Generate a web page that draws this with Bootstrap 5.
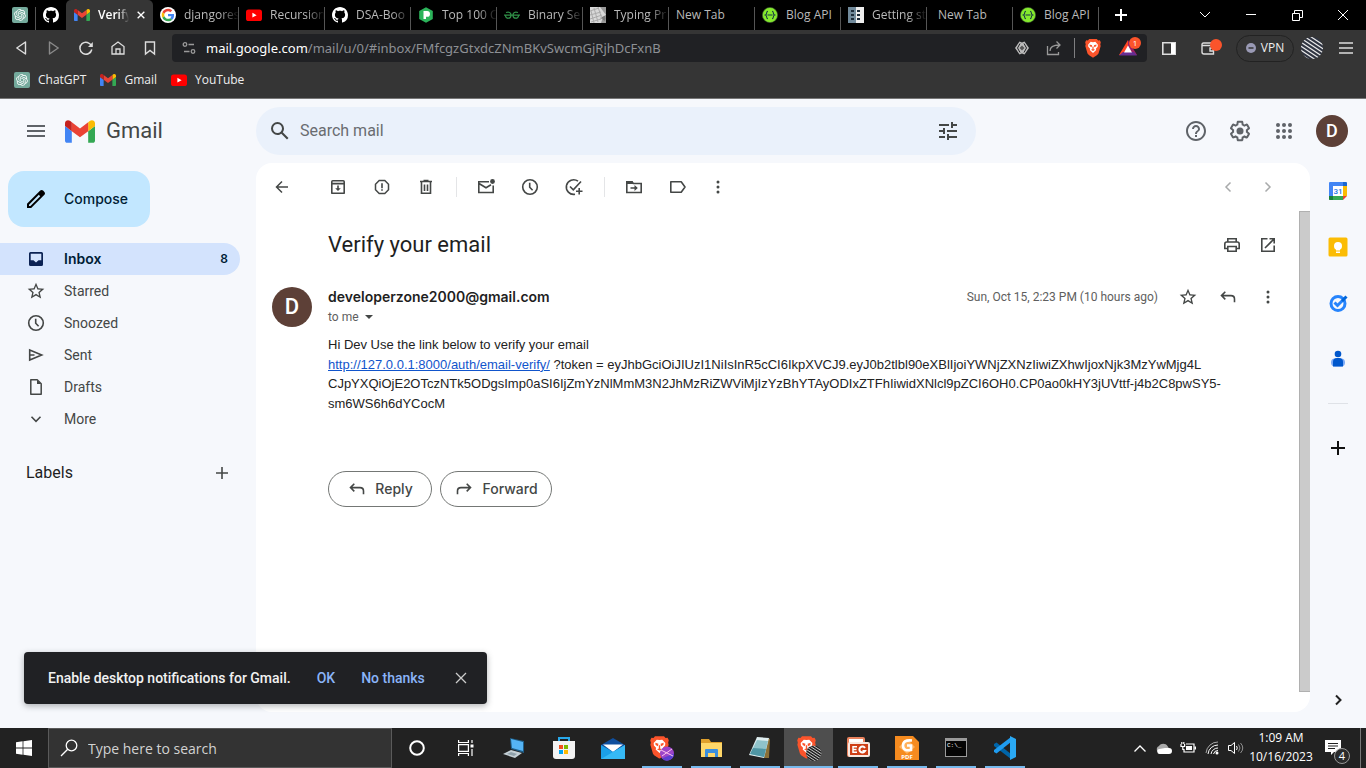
<!DOCTYPE html>
<html lang="en">
<head>
<meta charset="utf-8">
<meta name="viewport" content="width=device-width, initial-scale=1">
<title>Verify your email - Gmail</title>
<link href="https://cdn.jsdelivr.net/npm/bootstrap@5.3.0/dist/css/bootstrap.min.css" rel="stylesheet">
<style>
:root{--ui:"Open Sans","Noto Sans",sans-serif;--gs:Roboto,"Liberation Sans",sans-serif;--wide:Inter,Roboto,sans-serif;--ink:#444746}
body{font-family:var(--gs);font-size:14px;line-height:20px;color:#1f1f1f;background:#f6f8fc}
svg{display:block;flex:none;overflow:visible}
button{font:inherit;color:inherit;background:none;border:0;padding:0}
.ln{fill:none;stroke:currentColor}
.slot{display:flex;align-items:center;justify-content:center;flex:none}
.s32{width:32px}.s34{width:34px}.s36{width:36px}.s40{width:40px}.s44{width:44px}.s46{width:46px}.s49{width:49px}
.i16{width:16px;height:16px}.i20{width:20px;height:20px}.i24{width:24px;height:24px}

.chrome{font-family:var(--ui);font-size:12px;line-height:16px;color:#fff}
.tabstrip{height:30px;background:#000}
.pin{width:30px;position:relative}
.pin.sep{width:36px;padding-left:4px}
.tab{width:86px;padding:0 0 0 7px;gap:8px;color:#b9b9b9;text-decoration:none;position:relative}
.tab::after,.pin.sep::after{content:"";position:absolute;right:0;top:7px;bottom:0;width:1px;background:#555}
.tab span{flex:1;min-width:0;white-space:nowrap;-webkit-mask-image:linear-gradient(90deg,#000 65%,transparent);mask-image:linear-gradient(90deg,#000 65%,transparent)}
.tab.whole span{-webkit-mask-image:none;mask-image:none}
.tab.active{width:87px;padding:0 8px;background:#353535;color:#fff;border-radius:5px 5px 0 0;font-weight:600}
.tab.active::after{display:none}
.toolbar{height:36px;background:#353535;color:#ddd}
.nav-keys{width:172px;padding-left:6px}
.omni{height:28px;background:#202124;border-radius:4px;min-width:0}
.url{font-family:"Noto Sans",sans-serif;font-size:13px;color:#8d9095;white-space:nowrap;overflow:hidden}
.url b{font-weight:400;color:#fff}
.vpn{width:58px;height:27px;border:1px solid #222;border-radius:14px;gap:5px;color:#eee;font-size:12px}
.marks{height:33px;background:#353535;padding:0 0 4px 14px;gap:14px;border-bottom:1px solid #777}
.marks a{color:#eee;text-decoration:none;gap:8px}

.ghead{height:64px}
.gtools{color:#5f6368;padding-right:18px}
.side{width:256px}
.brand{font-size:22px;color:var(--ink);text-decoration:none;gap:11px;padding-left:9px}
.finder{flex:0 1 720px;height:48px;border-radius:24px;background:#eaf1fb;padding:0 4px 0 0;color:var(--ink)}
.finder input{flex:1;border:0;background:none;outline:0;font-size:16px;color:#1f1f1f;padding:0;min-width:0}
.finder input::placeholder{color:#696c70;opacity:1}
.face{background:#5d4037;color:#fff;border-radius:50%;display:flex;align-items:center;justify-content:center;flex:none;font-weight:500}
.f32{width:32px;height:32px;font-size:18px;margin-left:10px}
.f40{width:40px;height:40px;font-size:22px}
.compose{height:56px;width:142px;border-radius:16px;background:#c2e7ff;color:#001d35;font-family:var(--wide);font-weight:500;margin:8px 0 16px 8px;padding:0 16px;gap:16px}
.box{height:32px;padding:0 12px 0 26px;gap:18px;margin-right:16px;color:var(--ink);text-decoration:none;border-radius:0 16px 16px 0}
.box.on{background:#d3e3fd;color:#001d35;font-family:var(--wide);font-weight:600}
.box small{font-size:12px}
.labels{padding:0 24px 0 26px;margin-top:28px;font-size:16px;line-height:20px}
.pane{background:#fff;border-radius:16px;min-width:0;color:var(--ink)}
.acts{height:48px;padding:0 22px 0 4px}
.bar16{width:16px}.bar16 i{width:1px;height:20px;background:#e4e5e7}
.scroller{padding-bottom:20px}
.thumb{width:11px;background:#cbcbcb;border:1px solid #b0b0b0;border-right:0}
.subject{font-size:22px;line-height:28px;font-weight:400;color:#1f1f1f}
.subrow{padding:20px 13px 0 72px}
.msg{padding:28px 11px 0 16px;gap:16px}
.sender{font-family:var(--wide);font-weight:600;font-size:14px;line-height:20px;color:#1f1f1f}
.meta{font-size:12px;color:#5e5e5e}
.meta time{padding-right:10px}
.mailtext{font-family:"Liberation Sans",Arial,sans-serif;font-size:13px;line-height:1.5;color:#222;padding:8px 11px 0 72px}
.mailtext a{color:#15c}
.replies{padding:58px 0 0 72px;gap:8px}
.pill{height:36px;border:1px solid #747775;border-radius:18px;font-family:var(--wide);font-weight:500;gap:8px}
.pill.re{width:104px}.pill.fw{width:112px}
.rail{width:56px}
.rail .slot{height:56px;width:56px}
.rail hr{width:20px;margin:16px 0 16px;color:#9aa0a6}
.snack{position:absolute;left:24px;bottom:24px;width:463px;height:52px;background:#202124;border-radius:4px;color:#f1f1f1;padding:0 16px 0 24px;box-shadow:0 2px 6px rgba(60,64,67,.4);font-weight:500}
.snack .go{color:#8ab4f8;font-weight:500;margin-left:26px}

.taskbar{height:40px;background:#222;font-family:var(--ui);color:#fff;font-size:12px;line-height:19px}
.find{flex:0 1 344px;background:#333;border:1px solid #5a5a5a;padding:0 11px;gap:10px}
.find input{flex:1;border:0;background:none;outline:0;font-size:14px;color:#fff;padding:0;min-width:0}
.find input::placeholder{color:#d2d2d2;opacity:1}
.app{position:relative}
.run::after{content:"";position:absolute;left:5px;right:4px;bottom:0;height:2px;background:#76b9ed}
.app.front{background:#4e4e4e}.app.front::after{left:0;right:0}
.s24{width:24px}
.clock{width:66px;text-align:center;white-space:nowrap}
.bell{position:relative;width:38px}
.bell span{position:absolute;left:20px;top:20px;width:16px;height:16px;border:1px solid #999;border-radius:50%;background:#2b2b2b;font-size:11px;line-height:14px;text-align:center}
.peek{width:6px;border-left:1px solid #777}
</style>
</head>
<body class="d-flex flex-column min-vh-100">

<svg width="0" height="0" class="position-absolute" aria-hidden="true">
<symbol id="gpt" viewBox="0 0 24 24"><rect width="24" height="24" rx="3" fill="#74aa9c"/><path transform="translate(3.2 3.2) scale(.73)" fill="#fff" d="M22.2819 9.8211a5.9847 5.9847 0 0 0-.5157-4.9108 6.0462 6.0462 0 0 0-6.5098-2.9A6.0651 6.0651 0 0 0 4.9807 4.1818a5.9847 5.9847 0 0 0-3.9977 2.9 6.0462 6.0462 0 0 0 .7427 7.0966 5.98 5.98 0 0 0 .511 4.9107 6.051 6.051 0 0 0 6.5146 2.9001A5.9847 5.9847 0 0 0 13.2599 24a6.0557 6.0557 0 0 0 5.7718-4.2058 5.9894 5.9894 0 0 0 3.9977-2.9001 6.0557 6.0557 0 0 0-.7475-7.0729zm-9.022 12.6081a4.4755 4.4755 0 0 1-2.8764-1.0408l.1419-.0804 4.7783-2.7582a.7948.7948 0 0 0 .3927-.6813v-6.7369l2.02 1.1686a.071.071 0 0 1 .038.052v5.5826a4.504 4.504 0 0 1-4.4945 4.4944zm-9.6607-4.1254a4.4708 4.4708 0 0 1-.5346-3.0137l.142.0852 4.783 2.7582a.7712.7712 0 0 0 .7806 0l5.8428-3.3685v2.3324a.0804.0804 0 0 1-.0332.0615L9.74 19.9502a4.4992 4.4992 0 0 1-6.1408-1.6464zM2.3408 7.8956a4.485 4.485 0 0 1 2.3655-1.9728V11.6a.7664.7664 0 0 0 .3879.6765l5.8144 3.3543-2.0201 1.1685a.0757.0757 0 0 1-.071 0l-4.8303-2.7865A4.504 4.504 0 0 1 2.3408 7.872zm16.5963 3.8558L13.1038 8.364 15.1192 7.2a.0757.0757 0 0 1 .071 0l4.8303 2.7913a4.4944 4.4944 0 0 1-.6765 8.1042v-5.6772a.79.79 0 0 0-.407-.667zm2.0107-3.0231l-.142-.0852-4.7735-2.7818a.7759.7759 0 0 0-.7854 0L9.409 9.2297V6.8974a.0662.0662 0 0 1 .0284-.0615l4.8303-2.7866a4.4992 4.4992 0 0 1 6.6802 4.66zM8.3065 12.863l-2.02-1.1638a.0804.0804 0 0 1-.038-.0567V6.0742a4.4992 4.4992 0 0 1 7.3757-3.4537l-.142.0805L8.704 5.459a.7948.7948 0 0 0-.3927.6813zm1.0976-2.3654l2.602-1.4998 2.6069 1.4998v2.9994l-2.5974 1.4997-2.6067-1.4997Z"/></symbol>
<symbol id="github" viewBox="0 0 16 16"><path fill="#fff" d="M8 0C3.58 0 0 3.58 0 8c0 3.54 2.29 6.53 5.47 7.59.4.07.55-.17.55-.38 0-.19-.01-.82-.01-1.49-2.01.37-2.53-.49-2.69-.94-.09-.23-.48-.94-.82-1.13-.28-.15-.68-.52-.01-.53.63-.01 1.08.58 1.23.82.72 1.21 1.87.87 2.33.66.07-.52.28-.87.51-1.07-1.78-.2-3.64-.89-3.64-3.95 0-.87.31-1.59.82-2.15-.08-.2-.36-1.02.08-2.12 0 0 .67-.21 2.2.82.64-.18 1.32-.27 2-.27.68 0 1.36.09 2 .27 1.53-1.04 2.2-.82 2.2-.82.44 1.1.16 1.92.08 2.12.51.56.82 1.27.82 2.15 0 3.07-1.87 3.75-3.65 3.95.29.25.54.73.54 1.48 0 1.07-.01 1.93-.01 2.2 0 .21.15.46.55.38A8.012 8.012 0 0 0 16 8c0-4.42-3.58-8-8-8z"/></symbol>
<symbol id="gmail" viewBox="52 42 88 66"><path fill="#4285f4" d="M58 108h14V74L52 59v43c0 3.32 2.69 6 6 6"/><path fill="#34a853" d="M120 108h14c3.32 0 6-2.69 6-6V59l-20 15"/><path fill="#fbbc04" d="M120 48v26l20-15v-8c0-7.42-8.47-11.65-14.4-7.2"/><path fill="#ea4335" d="M72 74V48l24 18 24-18v26L96 92"/><path fill="#c5221f" d="M52 51v8l20 15V48l-5.6-4.2c-5.94-4.45-14.4-.22-14.4 7.2"/></symbol>
<symbol id="yt" viewBox="0 0 16 16"><rect y="2.5" width="16" height="11.5" rx="2.6" fill="#f00"/><path fill="#fff" d="M6.4 5.8v4.8l4.2-2.4z"/></symbol>
<symbol id="swag" viewBox="0 0 16 16"><circle cx="8" cy="8" r="7.6" fill="#85ea2d" stroke="#3d5b32" stroke-width=".6"/><path d="M6 4.200C3.800 4.200 5.400 7.400 3.500 8c1.900.6.3 3.800 2.500 3.800M10 4.200c2.200 0 .6 3.200 2.500 3.800-1.900.6-.3 3.800-2.500 3.800M5.500 8h5" fill="none" stroke="#173647" stroke-width="1.100"/></symbol>
<symbol id="brave" viewBox="0 0 16 20"><path fill="#fb542b" d="M4.200 1h7.600l1.300 1.500 1.700-.2 1 2-.5 2.200.4 1.500-2.200 7.600c-.5 1.300-3.900 3.200-5.500 4.100-1.600-.9-5-2.800-5.500-4.100L.3 8l.4-1.500-.5-2.200 1-2 1.700.2z"/><path fill="#fff" d="M8 4.200l2.300-.4 2.600 2.900-.2 2-1.800 2 .3 1.300L8 15l-3.200-3 .3-1.300-1.800-2-.2-2 2.600-2.900z"/><path fill="#fb542b" d="M4.500 6.500l2.600.8-.4 2-2-1zM11.500 6.500l-2.600.8.4 2 2-1zM7.400 8.500h1.200v3H7.400zM5.900 11.800L8 11l2.100.8L8 13z"/></symbol>
<symbol id="star" viewBox="0 0 24 24"><path fill="currentColor" d="M22 9.240l-7.190-.62L12 2 9.190 8.630 2 9.240l5.460 4.730L5.820 21 12 17.270 18.180 21l-1.630-7.030L22 9.240zM12 15.400l-3.760 2.270 1-4.280-3.320-2.880 4.380-.38L12 6.100l1.710 4.040 4.380.38-3.320 2.880 1 4.280L12 15.400z"/></symbol>
<symbol id="clock" viewBox="0 0 20 20"><g class="ln" stroke-width="1.600"><circle cx="10" cy="10" r="7.300"/><path d="M9.700 5.800V10.300l2.900 3"/></g></symbol>
<symbol id="reply" viewBox="0 0 20 20"><path class="ln" stroke-width="1.600" d="M7.300 4.800L3.500 8.600l3.800 3.800M3.700 8.600H13c2.200 0 3.500 1.200 3.500 3.400v3.200"/></symbol>
<symbol id="dots" viewBox="0 0 20 20"><g fill="currentColor"><circle cx="10" cy="5" r="1.500"/><circle cx="10" cy="10" r="1.500"/><circle cx="10" cy="15" r="1.500"/></g></symbol>
<symbol id="x" viewBox="0 0 12 12"><path class="ln" d="M1 1l10 10M11 1L1 11"/></symbol>
</svg>

<header class="chrome">
<nav class="tabstrip d-flex" aria-label="Tabs">
<a href="#" class="slot pin sep" aria-label="ChatGPT"><svg class="i16"><use href="#gpt"/></svg></a>
<a href="#" class="slot pin" aria-label="GitHub"><svg class="i16"><use href="#github"/></svg></a>
<a href="#" class="tab active d-flex align-items-center"><svg width="16" height="12"><use href="#gmail"/></svg><span>Verify</span><svg width="8" height="8" stroke-width="2"><use href="#x"/></svg></a>
<a href="#" class="tab d-flex align-items-center"><svg class="i16" viewBox="0 0 16 16"><circle cx="8" cy="8" r="8" fill="#fff"/><g transform="translate(1.700 1.700) scale(.263)"><path fill="#ea4335" d="M24 9.500c3.540 0 6.710 1.220 9.210 3.600l6.850-6.850C35.900 2.380 30.470 0 24 0 14.620 0 6.510 5.380 2.560 13.220l7.980 6.190C12.430 13.720 17.740 9.500 24 9.500z"/><path fill="#4285f4" d="M46.980 24.550c0-1.570-.15-3.090-.38-4.550H24v9.020h12.940c-.58 2.960-2.260 5.480-4.780 7.180l7.730 6c4.510-4.180 7.090-10.360 7.090-17.650z"/><path fill="#fbbc05" d="M10.530 28.590c-.48-1.450-.76-2.990-.76-4.590s.27-3.140.76-4.590l-7.980-6.190C.92 16.460 0 20.120 0 24c0 3.880.92 7.540 2.560 10.780l7.970-6.190z"/><path fill="#34a853" d="M24 48c6.480 0 11.930-2.130 15.890-5.810l-7.730-6c-2.150 1.450-4.920 2.300-8.160 2.300-6.260 0-11.570-4.220-13.470-9.910l-7.980 6.190C6.510 42.620 14.620 48 24 48z"/></g></svg><span>djangores</span></a>
<a href="#" class="tab d-flex align-items-center"><svg class="i16"><use href="#yt"/></svg><span>Recursion</span></a>
<a href="#" class="tab d-flex align-items-center"><svg class="i16"><use href="#github"/></svg><span>DSA-Boo</span></a>
<a href="#" class="tab d-flex align-items-center"><svg class="i16" viewBox="0 0 16 16"><path fill="#2bb35a" d="M8 .3l6.800 3.800v7.800L8 15.700 1.200 11.900V4.100z"/><path fill="#fff" d="M5.500 4h3.600a2.900 2.900 0 0 1 0 5.800H8V12H5.500z"/></svg><span>Top 100 C</span></a>
<a href="#" class="tab d-flex align-items-center"><svg class="i16" viewBox="0 0 16 16"><path class="ln" style="stroke:#2f8d46" stroke-width="1.300" d="M0 8.200h16M2 5.500c3-1 5 0 5 2.700 0 4-5.500 4-5.500.2M14 5.500c-3-1-5 0-5 2.700 0 4 5.500 4 5.500.2"/></svg><span>Binary Se</span></a>
<a href="#" class="tab d-flex align-items-center"><svg class="i16" viewBox="0 0 16 16"><rect width="16" height="16" fill="#d8d8d8"/><path fill="#999" d="M10 0h6v8zM12 13l4-3v6h-5z"/><path fill="#777" d="M16 8l-1 6-5-3z"/><path stroke="#aaa" fill="none" d="M0 4l9-3M0 8l11-3M0 12l12-4M1 15l10-3M4 1l4 14M8 0l4 12M1 4l3 12"/></svg><span>Typing Pr</span></a>
<a href="#" class="tab whole d-flex align-items-center"><span>New Tab</span></a>
<a href="#" class="tab whole d-flex align-items-center"><svg class="i16"><use href="#swag"/></svg><span>Blog API</span></a>
<a href="#" class="tab d-flex align-items-center"><svg class="i16" viewBox="0 0 16 16"><path fill="#718a9b" d="M0 0h8v16H0z"/><path fill="#eee" d="M8 0h8v16H8z"/><path fill="#1c2b39" d="M3 3h3v2H3zM3 7h3v2H3zM3 11h3v2H3zM9 3h3v2H9zM9 7h3v2H9zM9 11h3v2H9z"/></svg><span>Getting st</span></a>
<a href="#" class="tab whole d-flex align-items-center"><span class="ps-1">New Tab</span></a>
<a href="#" class="tab whole d-flex align-items-center"><svg class="i16"><use href="#swag"/></svg><span>Blog API</span></a>
<button class="slot s44" aria-label="New tab"><svg width="12" height="12" viewBox="0 0 12 12"><path class="ln" stroke-width="2" d="M6 0v12M0 6h12"/></svg></button>
<div class="ms-auto d-flex">
<button class="slot s46" aria-label="Search tabs"><svg width="10" height="6" viewBox="0 0 10 6"><path class="ln" d="M0 0l5 5 5-5"/></svg></button>
<button class="slot s46" aria-label="Minimize"><svg width="10" height="2" viewBox="0 0 10 2"><path fill="#fff" d="M0 0h10v1H0z"/></svg></button>
<button class="slot s46" aria-label="Restore"><svg width="11" height="11" viewBox="0 0 11 11"><path class="ln" d="M.5 3.500h7v7h-7zM2.500 3.500v-3h8v7h-3"/></svg></button>
<button class="slot s46" aria-label="Close"><svg width="12" height="12"><use href="#x"/></svg></button>
</div>
</nav>

<div class="toolbar d-flex align-items-center">
<div class="d-flex nav-keys flex-shrink-0">
<button class="slot s32" aria-label="Back"><svg class="i16" viewBox="0 0 16 16"><path class="ln" stroke-width="1.400" stroke-linejoin="round" d="M11.500 2v12L2.800 8z"/></svg></button>
<button class="slot s32 opacity-50" aria-label="Forward"><svg class="i16" viewBox="0 0 16 16"><path class="ln" stroke-width="1.400" stroke-linejoin="round" d="M3.500 2v12l8.700-6z"/></svg></button>
<button class="slot s32" aria-label="Reload"><svg class="i16" viewBox="0 0 16 16"><path class="ln" stroke-width="1.500" d="M13.500 6A6 6 0 1 0 13.800 9.500"/><path fill="currentColor" d="M14.800 2v5H10z"/></svg></button>
<button class="slot s32" aria-label="Home"><svg class="i16" viewBox="0 0 16 16"><path class="ln" stroke-width="1.300" d="M2 6.500L8 2l6 4.500V14H2zM6 14V9h4v5"/></svg></button>
<button class="slot s32" aria-label="Bookmark"><svg class="i16" viewBox="0 0 16 16"><path class="ln" stroke-width="1.400" d="M3.500 2h9v12L8 10.500 3.500 14z"/></svg></button>
</div>
<div class="omni d-flex align-items-center flex-fill me-1">
<button class="slot s34" aria-label="Site information"><svg width="14" height="14" viewBox="0 0 14 14"><g fill="none" stroke="#9a9a9a" stroke-width="1.300"><circle cx="3" cy="3.500" r="1.800"/><path d="M6.500 3.500H12M2 10.500h5.500"/><circle cx="11" cy="10.500" r="1.800"/></g></svg></button>
<div class="url flex-fill" role="textbox" aria-label="Address"><b>mail.google.com</b>/mail/u/0/#inbox/FMfcgzGtxdcZNmBKvSwcmGjRjhDcFxnB</div>
<button class="slot s32" aria-label="Translate"><svg class="i16" viewBox="0 0 16 16"><path fill="#bbb" d="M8 2.500l2.500-1L15 8l-4.500 6.500L8 13.500l-2.500 1L1 8l4.500-6.500z"/><path fill="none" stroke="#202124" d="M6 3.500L3.500 8 6 12.500M10 3.500L12.500 8 10 12.500"/><path fill="#555" d="M8 5.500L10.500 8 8 10.500 5.500 8z"/></svg></button>
<button class="slot s32" aria-label="Share"><svg class="i16" viewBox="0 0 16 16"><path fill="none" stroke="#999" stroke-width="1.300" d="M1.500 6v8.500h11V12M4 11c0-4 3-6 9.500-6M10.500 1.500L14 5l-3.500 3.500"/></svg></button>
<div class="vr my-1 opacity-50 ms-1"></div>
<button class="slot s36" aria-label="Brave Shields"><svg width="16" height="20"><use href="#brave"/></svg></button>
<button class="slot s36" aria-label="Rewards, 1 new"><svg width="20" height="18" viewBox="0 0 20 18"><path fill="#ff4724" d="M9 1L0 16h4.500L9 8z"/><path fill="#9e1f63" d="M9 1v7l4.500 8H18z"/><path fill="#662d91" d="M0 16.500h18L15 13H4z"/><path fill="#fff" d="M9 6.500l4 7H5z"/><circle cx="16" cy="4" r="6" fill="#fb542b"/><text x="16" y="7" font-size="8" fill="#fff" text-anchor="middle">1</text></svg></button>
</div>
<button class="slot s36" aria-label="Sidebar"><svg width="14" height="13" viewBox="0 0 14 13"><path class="ln" stroke-width="1.600" d="M.8.8h12.400v11.400H.8z"/><path fill="#fff" d="M9 1h4v11H9z"/></svg></button>
<button class="slot s49" aria-label="Wallet"><svg width="20" height="16" viewBox="0 0 20 16"><path class="ln" stroke-width="1.400" d="M11 3H1.500Q0 3 0 4.500V12q0 2 2 2h9.500V5.500H0M12 8H8v3h4"/><circle cx="14" cy="5" r="6" fill="#fb542b"/></svg></button>
<button class="slot vpn"><svg width="10" height="10" viewBox="0 0 10 10"><circle cx="5" cy="5" r="5" fill="#9a9ab5"/><path stroke="#353535" stroke-width="1.500" d="M2.500 5h5"/></svg>VPN</button>
<button class="slot s36" aria-label="Profile"><svg width="22" height="22" viewBox="0 0 22 22"><defs><clipPath id="disc"><circle cx="11" cy="11" r="11"/></clipPath></defs><g clip-path="url(#disc)"><path fill="#303542" d="M0 0h22v22H0z"/><path id="stripes" stroke="#e8e8e8" stroke-width="1.200" d="M-2-4l26 17M-2 0l26 17M-2 4l26 17M-2 8l26 17M-2 12l26 17M-2 16l26 17M-2-8l26 17"/></g></svg></button>
<button class="slot s32 me-1" aria-label="Menu"><svg width="14" height="12" viewBox="0 0 14 12"><path class="ln" stroke-width="1.400" d="M0 1h14M0 6h14M0 11h14"/></svg></button>
</div>

<nav class="marks d-flex align-items-center" aria-label="Bookmarks">
<a href="#" class="d-flex align-items-center"><svg class="i16"><use href="#gpt"/></svg>ChatGPT</a>
<a href="#" class="d-flex align-items-center"><svg width="16" height="12"><use href="#gmail"/></svg>Gmail</a>
<a href="#" class="d-flex align-items-center"><svg class="i16"><use href="#yt"/></svg>YouTube</a>
</nav>
</header>

<div class="flex-fill d-flex flex-column position-relative pb-3">
<div class="ghead d-flex align-items-center">
<div class="side d-flex align-items-center flex-shrink-0">
<button class="slot s40 ms-3" aria-label="Main menu"><svg class="i24" viewBox="0 0 24 24"><path fill="#5f6368" d="M3 18h18v-2H3v2zm0-5h18v-2H3v2zm0-7v2h18V6H3z"/></svg></button>
<a href="#" class="brand d-flex align-items-center"><svg width="30" height="23"><use href="#gmail"/></svg>Gmail</a>
</div>
<form class="finder d-flex align-items-center">
<button type="button" class="slot s44" aria-label="Search"><svg class="i24 ms-1" viewBox="0 0 24 24"><path fill="currentColor" d="M20.490 19l-5.730-5.730C15.530 12.200 16 10.910 16 9.500A6.500 6.500 0 1 0 9.500 16c1.410 0 2.700-.47 3.770-1.240L19 20.490 20.490 19zM5 9.500C5 7.010 7.010 5 9.500 5S14 7.010 14 9.500 11.990 14 9.500 14 5 11.990 5 9.500z"/></svg></button>
<input type="text" placeholder="Search mail" aria-label="Search mail">
<button type="button" class="slot s49" aria-label="Show search options"><svg class="i24" viewBox="0 0 24 24"><path fill="currentColor" d="M3 17v2h6v-2H3zM3 5v2h10V5H3zm10 16v-2h8v-2h-8v-2h-2v6h2zM7 9v2H3v2h4v2h2V9H7zm14 4v-2H11v2h10zm-6-4h2V7h4V5h-4V3h-2v6z"/></svg></button>
</form>
<div class="gtools ms-auto d-flex align-items-center">
<button class="slot s44" aria-label="Support"><svg class="i24" viewBox="0 0 24 24"><path fill="currentColor" d="M11 18h2v-2h-2v2zm1-16C6.480 2 2 6.480 2 12s4.480 10 10 10 10-4.480 10-10S17.520 2 12 2zm0 18c-4.410 0-8-3.590-8-8s3.590-8 8-8 8 3.590 8 8-3.590 8-8 8zm0-14c-2.210 0-4 1.790-4 4h2c0-1.100.9-2 2-2s2 .9 2 2c0 2-3 1.750-3 5h2c0-2.250 3-2.500 3-5 0-2.210-1.790-4-4-4z"/></svg></button>
<button class="slot s44" aria-label="Settings"><svg class="i24" viewBox="0 0 24 24"><path fill="currentColor" d="M13.850 22.250h-3.700c-.74 0-1.360-.54-1.450-1.270l-.27-1.890c-.27-.14-.53-.29-.79-.46l-1.800.72c-.7.26-1.470-.03-1.810-.65L2.200 15.530c-.35-.66-.2-1.440.36-1.880l1.530-1.190c-.01-.15-.02-.3-.02-.46 0-.15.01-.31.02-.46l-1.520-1.190c-.59-.45-.74-1.260-.37-1.880l1.850-3.190c.34-.62 1.110-.9 1.790-.63l1.810.73c.26-.17.52-.32.78-.46l.27-1.910c.09-.7.71-1.250 1.440-1.250h3.700c.74 0 1.360.54 1.450 1.270l.27 1.890c.27.14.53.29.79.46l1.800-.72c.71-.26 1.480.03 1.820.65l1.840 3.180c.36.66.2 1.440-.36 1.880l-1.520 1.190c.01.15.02.3.02.46s-.01.31-.02.46l1.520 1.190c.56.45.72 1.230.37 1.860l-1.860 3.220c-.34.62-1.110.9-1.800.63l-1.800-.72c-.26.17-.52.32-.78.46l-.27 1.910c-.1.68-.72 1.220-1.460 1.220zm-3.230-2h2.760l.37-2.550.53-.22c.44-.18.88-.44 1.340-.78l.45-.34 2.380.96 1.380-2.400-2.030-1.580.07-.56c.03-.26.06-.51.06-.78s-.03-.53-.06-.78l-.07-.56 2.030-1.580-1.390-2.400-2.390.96-.45-.35c-.42-.32-.87-.58-1.330-.77l-.52-.22-.37-2.550h-2.760l-.37 2.550-.53.21c-.44.19-.88.44-1.340.79l-.45.33-2.380-.95-1.390 2.390 2.030 1.580-.07.56a7 7 0 0 0-.06.79c0 .26.02.53.06.78l.07.56-2.030 1.580 1.380 2.400 2.390-.96.45.35c.43.33.86.58 1.330.77l.53.22.38 2.550z"/><circle cx="12" cy="12" r="3.500" fill="currentColor"/></svg></button>
<button class="slot s44" aria-label="Google apps"><svg class="i24" viewBox="0 0 24 24"><g fill="currentColor"><circle cx="6" cy="6" r="2"/><circle cx="12" cy="6" r="2"/><circle cx="18" cy="6" r="2"/><circle cx="6" cy="12" r="2"/><circle cx="12" cy="12" r="2"/><circle cx="18" cy="12" r="2"/><circle cx="6" cy="18" r="2"/><circle cx="12" cy="18" r="2"/><circle cx="18" cy="18" r="2"/></g></svg></button>
<button class="face f32" aria-label="Account">D</button>
</div>
</div>

<div class="d-flex flex-fill">
<aside class="side flex-shrink-0">
<button class="compose d-flex align-items-center"><svg class="i24" viewBox="0 0 24 24"><path fill="#000" d="M20.410 4.940l-1.350-1.350c-.78-.78-2.050-.78-2.830 0L3 16.820V21h4.180L20.410 7.770c.79-.78.79-2.050 0-2.830zm-14 14.120L5 19v-1.360l9.820-9.820 1.410 1.410-9.820 9.830z"/></svg>Compose</button>
<nav aria-label="Mailboxes">
<a href="#" class="box on d-flex align-items-center"><svg class="i20" viewBox="0 0 20 20"><path fill="#0b2253" d="M4.500 3h11A1.500 1.500 0 0 1 17 4.500v11a1.500 1.500 0 0 1-1.500 1.500h-11A1.500 1.500 0 0 1 3 15.500v-11A1.500 1.500 0 0 1 4.500 3z"/><path fill="#d3e3fd" d="M4.700 4.700h10.600v6.600H12.500L10 13.500 7.500 11.300H4.700z"/></svg>Inbox<small class="ms-auto">8</small></a>
<a href="#" class="box d-flex align-items-center"><svg class="i20" viewBox="0 0 24 24"><use href="#star" width="24" height="24"/></svg>Starred</a>
<a href="#" class="box d-flex align-items-center"><svg class="i20"><use href="#clock"/></svg>Snoozed</a>
<a href="#" class="box d-flex align-items-center"><svg class="i20" viewBox="0 0 20 20"><path class="ln" stroke-width="1.600" d="M3.700 5l12 5-12 5zM4 10h4.500"/></svg>Sent</a>
<a href="#" class="box d-flex align-items-center"><svg class="i20" viewBox="0 0 20 20"><path class="ln" stroke-width="1.500" stroke-linejoin="round" d="M4.800 2.800h6.400l4 4v10.400H4.800z"/><path fill="currentColor" d="M11 3v4h4z"/></svg>Drafts</a>
<a href="#" class="box d-flex align-items-center"><svg class="i20" viewBox="0 0 20 20"><path class="ln" stroke-width="1.600" d="M5.500 7.800L10 12.300l4.500-4.500"/></svg>More</a>
</nav>
<div class="labels d-flex align-items-center justify-content-between">Labels<button class="slot" aria-label="Create new label"><svg width="20" height="20" viewBox="0 0 20 20"><path fill="none" stroke="#444746" stroke-width="1.600" d="M10 4v12M4 10h12"/></svg></button></div>
</aside>

<main class="pane flex-fill d-flex flex-column">
<div class="acts d-flex">
<button class="slot s44 me-2" aria-label="Back to Inbox"><svg class="i20" viewBox="0 0 20 20"><path class="ln" stroke-width="1.500" d="M16 10H4.700M10 4.500L4.500 10l5.500 5.500"/></svg></button>
<button class="slot s44 ms-1" aria-label="Archive"><svg class="i20" viewBox="0 0 20 20"><path class="ln" stroke-width="1.600" stroke-linejoin="round" d="M3.800 4.800q0-1 1-1h10.400q1 0 1 1v11.400H3.800zM3.800 6.600h12.400"/><path fill="currentColor" d="M9.200 8.500h1.600v2.800h2L10 14l-2.800-2.700h2z"/></svg></button>
<button class="slot s44" aria-label="Report spam"><svg class="i20" viewBox="0 0 20 20"><path class="ln" stroke-width="1.500" d="M7.200 3.500h5.600l3.700 3.700v5.600l-3.700 3.700H7.200l-3.700-3.700V7.200z"/><path fill="currentColor" d="M9.200 6.200h1.600v5H9.200zM9.200 12.300h1.600v1.500H9.200z"/></svg></button>
<button class="slot s44" aria-label="Delete"><svg class="i20" viewBox="0 0 20 20"><path class="ln" stroke-width="1.600" d="M5.500 5v11.200h9V5M4 4.500h12M7.500 3.500h5M8.500 7.500v6.500M11.500 7.500v6.500"/></svg></button>
<div class="slot bar16"><i></i></div>
<button class="slot s44" aria-label="Mark as unread"><svg class="i20" viewBox="0 0 20 20"><path class="ln" stroke-width="1.600" d="M13 4.800H2.800v10.700h14.400V8.500M3 6.500l7 4.300 5-3"/><circle cx="16.500" cy="4.500" r="2.400" fill="currentColor"/></svg></button>
<button class="slot s44" aria-label="Snooze"><svg class="i20"><use href="#clock"/></svg></button>
<button class="slot s44" aria-label="Add to Tasks"><svg class="i20" viewBox="0 0 20 20"><path class="ln" stroke-width="1.600" d="M14 4.200A7.300 7.300 0 1 0 11 17.200M6 9.500l3.300 3.300L17 4.500M15.200 11v6.500M12 14.200h6.500"/></svg></button>
<div class="slot bar16"><i></i></div>
<button class="slot s44" aria-label="Move to"><svg class="i20" viewBox="0 0 20 20"><path class="ln" stroke-width="1.600" d="M2.800 4.800h5l1.500 1.700h7.900v9H2.800zM6.500 11h6"/><path fill="currentColor" d="M2.500 4h6l1.500 3H2.500zM10.500 8l3.300 3-3.300 3z"/></svg></button>
<button class="slot s44" aria-label="Labels"><svg class="i20" viewBox="0 0 20 20"><path class="ln" stroke-width="1.600" stroke-linejoin="round" d="M2.800 4.800h10.400L17 10l-3.800 5.200H2.800z"/></svg></button>
<button class="slot s36" aria-label="More"><svg class="i20"><use href="#dots"/></svg></button>
<div class="ms-auto d-flex" style="color:#a8aaab">
<button class="slot s40" aria-label="Newer"><svg class="i20" viewBox="0 0 20 20"><path class="ln" stroke-width="1.500" d="M12.500 5.500L8 10l4.500 4.500"/></svg></button>
<button class="slot s40" aria-label="Older"><svg class="i20" viewBox="0 0 20 20"><path class="ln" stroke-width="1.500" d="M7.500 5.500L12 10l-4.500 4.500"/></svg></button>
</div>
</div>
<div class="scroller d-flex flex-fill">
<article class="flex-fill">
<div class="subrow d-flex align-items-center">
<h1 class="subject m-0 flex-fill">Verify your email</h1>
<button class="slot s36" aria-label="Print all"><svg class="i20" viewBox="0 0 20 20"><path class="ln" stroke-width="1.600" d="M5.800 6.500V3.800h8.400v2.700M5.500 13.500H2.800V9q0-2 2-2h10.400q2 0 2 2v4.500H14.500M5.800 11.500h8.400v4.700H5.800z"/></svg></button>
<button class="slot s36" aria-label="In new window"><svg class="i20" viewBox="0 0 20 20"><path class="ln" stroke-width="1.600" d="M9.500 3.800H3.800v12.400h12.400V10.500M11.500 3.800h4.700v4.700M16 4L7 13"/></svg></button>
</div>
<div class="msg d-flex">
<div class="face f40">D</div>
<div class="flex-fill">
<div class="sender">developerzone2000@gmail.com</div>
<div class="meta d-flex align-items-center">to me<button class="slot ms-1" aria-label="Show details"><svg width="12" height="12" viewBox="0 0 12 12"><path fill="#444746" d="M2 4h8L6 8z"/></svg></button></div>
</div>
<div class="meta d-flex align-self-start"><time>Sun, Oct 15, 2:23 PM (10 hours ago)</time>
<button class="slot s40" aria-label="Star"><svg class="i20" viewBox="0 0 24 24" color="#444746"><use href="#star" width="24" height="24"/></svg></button>
<button class="slot s40" aria-label="Reply"><svg class="i20" color="#444746"><use href="#reply"/></svg></button>
<button class="slot s40" aria-label="More"><svg class="i20" color="#444746"><use href="#dots"/></svg></button></div>
</div>
<div class="mailtext">Hi Dev Use the link below to verify your email<br><a href="#">http://127.0.0.1:8000/auth/email-verify/</a> ?token = eyJhbGciOiJIUzI1NiIsInR5cCI6IkpXVCJ9.eyJ0b2tlbl90eXBlIjoiYWNjZXNzIiwiZXhwIjoxNjk3MzYwMjg4L<br>CJpYXQiOjE2OTczNTk5ODgsImp0aSI6IjZmYzNlMmM3N2JhMzRiZWViMjIzYzBhYTAyODIxZTFhIiwidXNlcl9pZCI6OH0.CP0ao0kHY3jUVttf-j4b2C8pwSY5-<br>sm6WS6h6dYCocM</div>
<div class="replies d-flex">
<button class="pill re slot"><svg class="i20"><use href="#reply"/></svg>Reply</button>
<button class="pill fw slot"><svg class="i20" viewBox="0 0 20 20"><use href="#reply" width="20" height="20" transform="matrix(-1 0 0 1 20 0)"/></svg>Forward</button>
</div>
</article>
<div class="thumb flex-shrink-0"></div>
</div>
</main>

<aside class="rail flex-shrink-0 d-flex flex-column align-items-center">
<a href="#" class="slot" aria-label="Calendar"><svg class="i20" viewBox="0 0 20 20"><path fill="#4285f4" d="M1.500 1H15v4H5v10H1V2z"/><path fill="#1967d2" d="M15 1h3.500l.5.500V5h-4z"/><path fill="#fbbc04" d="M15 5h4v10h-4z"/><path fill="#34a853" d="M5 15h10v4H5z"/><path fill="#188038" d="M1 15h4v4H1.500L1 18.500z"/><path fill="#ea4335" d="M15 15h4l-4 4z"/><path fill="#fff" d="M5 5h10v10H5z"/><text x="10" y="13" font-size="8" font-weight="500" fill="#1a73e8" text-anchor="middle">31</text></svg></a>
<a href="#" class="slot" aria-label="Keep"><svg class="i20" viewBox="0 0 20 20"><rect x=".5" y=".5" width="19" height="19" rx="1.500" fill="#fbbc04"/><circle cx="10" cy="9" r="4" fill="#fff"/><path fill="#fff" d="M8 10h4v3.500H8zM8 14.500h4V16H8z"/></svg></a>
<a href="#" class="slot" aria-label="Tasks"><svg class="i20" viewBox="0 0 20 20"><circle cx="10" cy="10.500" r="7" fill="none" stroke="#2684fc" stroke-width="3"/><path fill="none" stroke="#2684fc" stroke-width="3" d="M6.500 9.500l3 3 5-5"/><path stroke="#0066da" stroke-width="3" d="M14 8l4.500-4.500"/></svg></a>
<a href="#" class="slot" aria-label="Contacts"><svg class="i20" viewBox="0 0 20 20"><rect x="3" y="9.500" width="14" height="8" rx="4" fill="#7baaf7"/><path fill="#0057cc" d="M5 17.500V13a4 4 0 0 1 4-4h2a4 4 0 0 1 4 4v4.500z"/><circle cx="10" cy="5" r="3.300" fill="#0057cc"/></svg></a>
<hr>
<a href="#" class="slot" aria-label="Get add-ons"><svg class="i20" viewBox="0 0 20 20"><path stroke="#111" stroke-width="2" d="M10 3v14M3 10h14"/></svg></a>
<button class="slot mt-auto" style="height:24px" aria-label="Hide side panel"><svg class="i20" viewBox="0 0 20 20"><path fill="none" stroke="#222" stroke-width="2" d="M8 5.500l4.500 4.500L8 14.500"/></svg></button>
</aside>
</div>

<div class="snack d-flex align-items-center" role="alert">Enable desktop notifications for Gmail.<button class="go">OK</button><button class="go">No thanks</button><button class="slot ms-auto me-1" aria-label="Dismiss"><svg width="12" height="12" stroke-width="1.300" color="#ccc"><use href="#x"/></svg></button></div>
</div>

<footer class="taskbar d-flex">
<button class="slot" style="width:48px" aria-label="Start"><svg class="i16" viewBox="0 0 16 16"><path fill="#fff" d="M0 2.200L6.600 1.300v6.300H0zM7.400 1.200L16 0v7.600H7.400zM0 8.400h6.600v6.300L0 13.800zM7.400 8.400H16V16l-8.600-1.200z"/></svg></button>
<label class="find d-flex align-items-center"><svg width="18" height="18" viewBox="0 0 18 18"><g class="ln" stroke-width="1.300"><circle cx="11.500" cy="6.500" r="5.300"/><path d="M7.700 10.300L1 17"/></g></svg><input type="text" placeholder="Type here to search" aria-label="Search Windows"></label>
<button class="slot s49" aria-label="Cortana"><svg class="i16" viewBox="0 0 16 16"><circle cx="8" cy="8" r="6.800" class="ln" stroke-width="2"/></svg></button>
<button class="slot s49" aria-label="Task view"><svg class="i16" viewBox="0 0 16 16"><path class="ln" stroke-width="1.200" d="M.6 0v2.500h9.800V0M.6 16v-2.500h9.800V16M.6 4.600h9.800v6.800H.6zM14 0v3M14 9v7"/><path fill="#fff" d="M12.500 4.500h3v3h-3z"/></svg></button>
<button class="slot s49 app" aria-label="This PC"><svg class="i24" viewBox="0 0 24 24"><path fill="#1f5d87" d="M7 2l14 3v12L8 13z"/><path fill="#55b4f5" d="M8 3l12 3v9L9 12z"/><path fill="#c5d0d6" d="M0 18l8-4 11 3-7 5z"/><path fill="#8fa0aa" d="M4 18l4-2 6 2-3 2z"/></svg></button>
<button class="slot s49 app" aria-label="Microsoft Store"><svg class="i24" viewBox="0 0 24 24"><path fill="none" stroke="#28a8ea" stroke-width="2" d="M7 7V2h10v5"/><path fill="#f3f3f3" d="M1 5h22v15q0 3-3 3H4q-3 0-3-3z"/><path fill="#f25022" d="M7 9h4v4H7z"/><path fill="#7fba00" d="M12 9h4v4h-4z"/><path fill="#00a4ef" d="M7 14h4v4H7z"/><path fill="#ffb900" d="M12 14h4v4h-4z"/></svg></button>
<button class="slot s49 app" aria-label="Mail"><svg class="i24" viewBox="0 0 24 24"><path fill="#0f4f9e" d="M0 9l12-7 12 7v13H0z"/><path fill="#fff" d="M2 8.500h20L12 16z"/><path fill="#1ba0e8" d="M0 9l12 7L24 9v14H0z"/><path fill="#36b9f5" d="M0 23l24-14v14z"/></svg></button>
<button class="slot s49 app run" aria-label="Brave"><svg class="i24" viewBox="0 0 24 24"><use href="#brave" x="0" y="-1" width="19" height="24"/><circle cx="17" cy="17.500" r="7" fill="#9b44c9"/><path fill="#5b3fd0" d="M12 22.500a7 7 0 0 0 12-5z"/><path stroke="#ffc2ec" fill="none" d="M11 14l12 6M12 20l10-7"/></svg></button>
<button class="slot s49 app run" aria-label="File Explorer"><svg class="i24" viewBox="0 0 24 24"><path fill="#e0a02c" d="M2 3h8l2 3h11v6H2z"/><path fill="#ffd769" d="M2 7h21v14H2z"/><path fill="#3c8fdd" d="M6 14q0-1 1-1h11q1 0 1 1v7h-3v-4h-7v4H6z"/></svg></button>
<button class="slot s49 app run" aria-label="Notepad"><svg class="i24" viewBox="0 0 24 24"><path fill="#8a6f35" d="M20 2l2 1-1 19-5 0z"/><path fill="#dfeef0" d="M9 1l12 1-5 20-15-3z"/><path fill="#8fc3ca" d="M9 4l11 1-4 16-14-3z"/><path fill="#4f96a4" d="M5 12l13 1-2 8-14-3z"/></svg></button>
<button class="slot s49 app run front" aria-label="Brave, active window"><svg class="i24" viewBox="0 0 24 24"><use href="#brave" x="0" y="-1" width="19" height="24"/><g transform="translate(9 9.500) scale(.7)"><g clip-path="url(#disc)"><path fill="#222" d="M0 0h22v22H0z"/><use href="#stripes"/></g></g></svg></button>
<button class="slot s49 app run" aria-label="PowerPoint"><svg class="i24" viewBox="0 0 24 24"><rect x="1" y="1" width="18" height="20" rx="2" fill="#e9825d"/><rect x="3" y="3" width="14" height="4" fill="#fff"/><rect x="2" y="6" width="22" height="15" rx="2" fill="#f9e8e0"/><rect x="4" y="8" width="18" height="11" fill="#cf3f16"/><path stroke="#fff" stroke-width="1.500" fill="none" d="M11 10.700H7v5.600h4M7 13.500h3.500"/><path fill="none" stroke="#fff" stroke-width="2" d="M19 12a3 3 0 1 0 0 3h-2.500"/></svg></button>
<button class="slot s49 app run" aria-label="Foxit PDF"><svg class="i24" viewBox="0 0 24 24"><path fill="#f68b1f" d="M0 0h18l6 6v18H0z"/><path fill="#ffb15c" d="M12 3l8 8-8 7-8-7z"/><path fill="none" stroke="#fff" stroke-width="2.600" d="M17 4.500q-9-1-9 5t8 4.500V9.500h-4"/><text x="12" y="23" font-size="6" font-weight="700" fill="#fff" text-anchor="middle">PDF</text></svg></button>
<button class="slot s49 app run" aria-label="Command Prompt"><svg class="i24" viewBox="0 0 24 24"><rect x="1" y="2" width="22" height="19" fill="#9b9b9b"/><path fill="#050505" d="M2 5h20v15H2z"/><text x="3" y="11" font-size="6" fill="#fff" font-family="Liberation Mono,monospace">C:\_</text></svg></button>
<button class="slot s49 app run" aria-label="Visual Studio Code"><svg class="i24" viewBox="0 0 24 24"><path fill="#0065a9" d="M1 8l2.500-1.500L18 18v5L1 10z"/><path fill="#1f9cf0" d="M1 16l2.500 1.500L18 6V1L1 14z"/><path fill="#2aa9f4" d="M17 0l6 3v18l-6 3z"/></svg></button>
<div class="ms-auto d-flex">
<button class="slot s24" aria-label="Show hidden icons"><svg width="12" height="7" viewBox="0 0 12 7"><path class="ln" stroke-width="1.300" d="M.5 6.500L6 1l5.500 5.500"/></svg></button>
<button class="slot s24" aria-label="OneDrive"><svg width="16" height="11" viewBox="0 0 16 11"><path fill="#aaa" d="M2 9a3.500 3.500 0 0 1 1-6 5 5 0 0 1 8.500 0L14 7z"/><path fill="#fff" d="M4 11a2.500 2.500 0 0 1-.5-5L9 5l4 0a3 3 0 0 1 0 6z"/></svg></button>
<button class="slot s24" aria-label="Battery"><svg width="16" height="14" viewBox="0 0 16 14"><path class="ln" stroke-width="1.200" d="M6 3h8v8H4V8M1 3v2.500h3.600V3M1.800 1v2M3.800 1v2M2.800 6v3M15.400 5.500v3"/><path fill="#fff" d="M6 5h6v4H6z"/></svg></button>
<button class="slot s24" aria-label="Network"><svg width="14" height="14" viewBox="0 0 14 14"><g class="ln"><path d="M1 12A12 12 0 0 1 13 1" opacity=".6"/><path d="M3 13A10 10 0 0 1 13 4M6 13a7 7 0 0 1 7-6M8.500 13a4.500 4.500 0 0 1 4.500-3.500"/></g><circle cx="12" cy="12" r="1.500" fill="#fff"/></svg></button>
<button class="slot s24" aria-label="Volume"><svg class="i16" viewBox="0 0 16 16"><path class="ln" d="M.5 5.500h2.500L6.500 2.500v11L3 10.500H.5zM8.500 6q1.500 2 0 4"/><path class="ln" opacity=".5" d="M10.500 4.500q3 3.500 0 7M12.500 3q4.500 5 0 10"/></svg></button>
<div class="clock">1:09 AM<br>10/16/2023</div>
<button class="bell slot" aria-label="4 new notifications"><svg class="i16" viewBox="0 0 16 16"><path fill="#fff" d="M0 0h16v12H9l-3 3v-3H0z"/><path stroke="#222" d="M3 3.500h10M3 6h10M3 8.500h7"/></svg><span>4</span></button>
<div class="peek ms-2"></div>
</div>
</footer>
<script src="https://cdn.jsdelivr.net/npm/bootstrap@5.3.0/dist/js/bootstrap.bundle.min.js"></script>
</body>
</html>
